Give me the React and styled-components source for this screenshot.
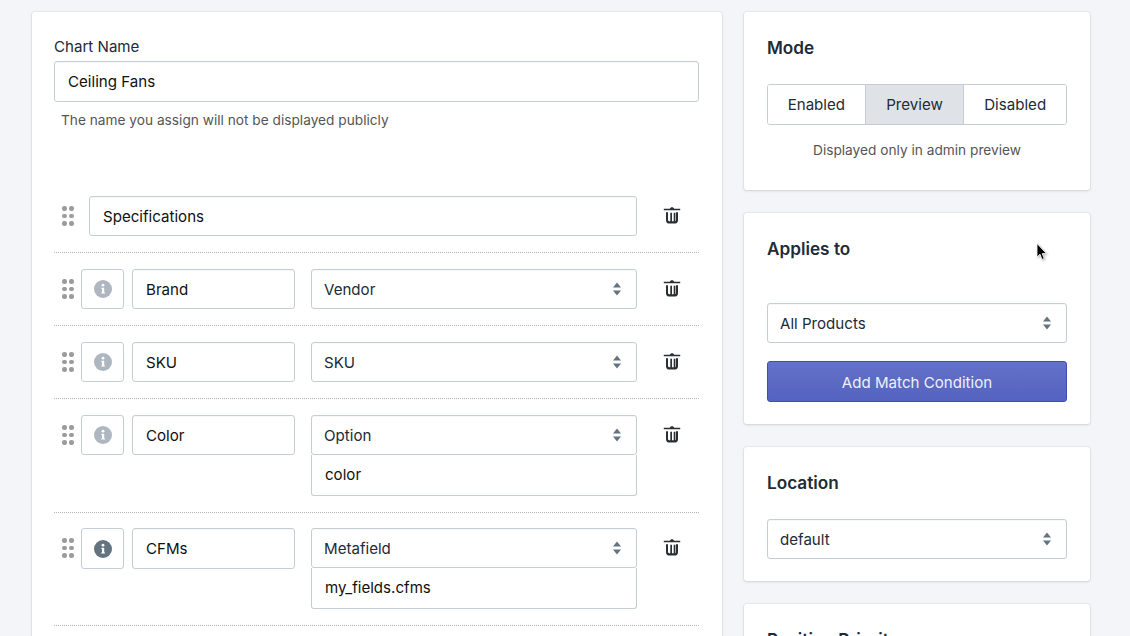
import React from 'react';
import styled, {createGlobalStyle} from 'styled-components';

const GlobalStyle = createGlobalStyle`
  html, body {
    margin: 0;
    padding: 0;
    height: 636px;
    overflow: hidden;
    background: #f4f5f9;
    font-family: Inter, "Noto Sans", sans-serif;
    color: #212b36;
  }
  * { box-sizing: border-box; }
`
const Page = styled.div`
  display: flex;
  align-items: flex-start;
  gap: 22px;
  width: 1130px;
  height: 636px;
  padding: 12px 40px 0 32px;
  overflow: hidden;
  position: relative;
`
const Card = styled.div`
  background: #fff;
  border-radius: 3px;
  box-shadow: 0 0 0 1px rgba(63, 63, 68, 0.05), 0 1px 3px 0 rgba(63, 63, 68, 0.15);
`
const MainCard = styled(Card)`
  width: 690px;
  flex-shrink: 0;
  padding: 25px 23px 40px 22px;
`
const Side = styled.div`
  width: 346px;
  flex-shrink: 0;
  display: flex;
  flex-direction: column;
  gap: 23px;
`
const SideCard = styled(Card)`
  padding: 24px 23px ${props => props.bottom || 22}px;
`
const Heading = styled.h2`
  margin: 0 0 ${props => props.gap || 24}px;
  font-size: 17.2px;
  line-height: 24px;
  font-weight: 600;
  color: #212b36;
`
const Label = styled.label`
  display: block;
  font-size: 15.1px;
  line-height: 20px;
  color: #212b36;
  margin-bottom: 4px;
`
const Input = styled.div`
  height: ${props => props.tall ? 41 : 40}px;
  padding: 0 13px;
  display: flex;
  align-items: center;
  flex-shrink: 0;
  width: ${props => props.w ? props.w + 'px' : 'auto'};
  margin-left: ${props => props.ml || 0}px;
  background: #fff;
  border: 1px solid #c4cdd5;
  border-radius: 3px;
  font-size: 15.1px;
  color: #111;
  box-shadow: inset 0 1px 0 0 rgba(99, 115, 129, 0.05);
`
const Help = styled.p`
  margin: 8px 0 0;
  padding-left: 7px;
  font-size: 13.7px;
  line-height: 20px;
  color: #555;
`
const List = styled.div`
  margin-top: 66px;
`
const Row = styled.div`
  display: flex;
  align-items: flex-start;
  padding: ${props => props.top || 16}px 0 16px;
  border-bottom: 1px dotted #b5b5b5;
  &:first-child { padding-top: 0; }
`
const Grip = styled.div`
  width: 11px;
  margin: 10px 8px 0 8px;
  display: grid;
  grid-template-columns: 4px 4px;
  gap: 3px;
  flex-shrink: 0;
  span {
    width: 4.5px;
    height: 4.5px;
    border-radius: 50%;
    background: #9b9b9b;
  }
`
const InfoButton = styled.div`
  width: 43px;
  height: ${props => props.tall ? 41 : 40}px;
  margin-right: 8px;
  flex-shrink: 0;
  display: flex;
  align-items: center;
  justify-content: center;
  border: 1px solid #c4cdd5;
  border-radius: 3px;
  background: #fff;
`
const FieldStack = styled.div`
  width: 326px;
  margin-left: 16px;
  flex-shrink: 0;
`
const SelectBox = styled(Input)`
  justify-content: space-between;
  padding: 0 15px 0 12px;
  color: #212b36;
`
const SubInput = styled(Input)`
  height: 41px;
  padding-bottom: 1px;
  border-top: none;
  border-top-left-radius: 0;
  border-top-right-radius: 0;
  box-shadow: none;
`
const TrashButton = styled.div`
  width: 20px;
  margin: 10px 0 0 25px;
  flex-shrink: 0;
  display: flex;
  justify-content: center;
`
const Segments = styled.div`
  display: flex;
  height: 41px;
  border: 1px solid #c4cdd5;
  border-radius: 3px;
  overflow: hidden;
`
const Segment = styled.div`
  flex: ${props => props.w};
  display: flex;
  align-items: center;
  justify-content: center;
  font-size: 15.1px;
  color: #212b36;
  background: ${props => props.active ? '#dfe3e8' : '#fff'};
  border-left: ${props => props.active ? '1px solid #c4cdd5' : 'none'};
  border-right: ${props => props.active ? '1px solid #c4cdd5' : 'none'};
`
const Note = styled.p`
  margin: 15px 0 0;
  text-align: center;
  font-size: 13.7px;
  line-height: 20px;
  color: #555;
`
const PrimaryButton = styled.button`
  display: block;
  width: 100%;
  height: 41px;
  margin-top: 18px;
  padding: 2px 0 0;
  border: 1px solid #3f4eae;
  border-radius: 3px;
  background: linear-gradient(180deg, #6371c7, #5563c1);
  color: #eef0fa;
  font-family: inherit;
  font-size: 15.1px;
`
const Cursor = styled.svg`
  position: absolute;
  left: 1036px;
  top: 243px;
  filter: drop-shadow(1px 1px 1px rgba(0, 0, 0, 0.3));
`

const DragHandle = () => (
    <Grip>
        {[0, 1, 2, 3, 4, 5].map((i) => <span key={i}/>)}
    </Grip>
);

const InfoIcon = ({on}) => (
    <svg width="18" height="18" viewBox="0 0 18 18">
        <circle cx="9" cy="9" r="9" fill={on ? '#637381' : '#aeb7bf'}/>
        <circle cx="9" cy="5.2" r="1.4" fill="#fff"/>
        <path d="M7.4 7.8H10.2V12.4H11V13.6H7.2V12.4H8V9H7.4Z" fill="#fff"/>
    </svg>
);

const TrashIcon = () => (
    <svg width="18" height="18" viewBox="0 0 18 18">
        <path d="M6.8 2.8C7.2 0.6 10.8 0.6 11.2 2.8H17.2V4.2H0.8V2.8Z" fill="#2b2f33"/>
        <path d="M3 6.2H5V13.6C5 14.8 5.4 15.2 6.4 15.2H7.3V6.8H9V15.2H10.7V6.8H12.4V15.2C12.9 15.2 13 14.8 13 13.6V6.2H15V14C15 16.2 14 17.4 12.4 17.4H5.6C4 17.4 3 16.2 3 14Z" fill="#2b2f33"/>
    </svg>
);

const UpDown = () => (
    <svg width="8" height="14" viewBox="0 0 8 14">
        <path d="M4 0.5L8 5.5H0Z" fill="#637381"/>
        <path d="M4 13.5L0 8.5H8Z" fill="#637381"/>
    </svg>
);

const Select = ({value}) => (
    <SelectBox>
        {value}
        <UpDown/>
    </SelectBox>
);

const fields = [
    {name: 'Brand', type: 'Vendor'},
    {name: 'SKU', type: 'SKU'},
    {name: 'Color', type: 'Option', sub: 'color'},
    {name: 'CFMs', type: 'Metafield', sub: 'my_fields.cfms', on: true},
];

const App = () => {
    return (
        <Page>
            <GlobalStyle/>
            <MainCard>
                <Label>Chart Name</Label>
                <Input tall>Ceiling Fans</Input>
                <Help>The name you assign will not be displayed publicly</Help>
                <List>
                    <Row>
                        <DragHandle/>
                        <Input w={548} ml={8}>Specifications</Input>
                        <TrashButton><TrashIcon/></TrashButton>
                    </Row>
                    {fields.map((item) => (
                        <Row key={item.name} top={item.on ? 15 : 16}>
                            <DragHandle/>
                            <InfoButton tall={item.on}><InfoIcon on={item.on}/></InfoButton>
                            <Input w={163} tall={item.on}>{item.name}</Input>
                            <FieldStack>
                                <Select value={item.type}/>
                                {item.sub && <SubInput>{item.sub}</SubInput>}
                            </FieldStack>
                            <TrashButton><TrashIcon/></TrashButton>
                        </Row>
                    ))}
                </List>
            </MainCard>
            <Side>
                <SideCard bottom={30}>
                    <Heading>Mode</Heading>
                    <Segments>
                        <Segment w={98}>Enabled</Segment>
                        <Segment w={99} active>Preview</Segment>
                        <Segment w={103}>Disabled</Segment>
                    </Segments>
                    <Note>Displayed only in admin preview</Note>
                </SideCard>
                <SideCard>
                    <Heading gap={42}>Applies to</Heading>
                    <Select value="All Products"/>
                    <PrimaryButton>Add Match Condition</PrimaryButton>
                </SideCard>
                <SideCard>
                    <Heading>Location</Heading>
                    <Select value="default"/>
                </SideCard>
                <SideCard>
                    <Heading>Position Priority</Heading>
                </SideCard>
            </Side>
            <Cursor width="12" height="18" viewBox="0 0 12 18">
                <path d="M1 0.5V14L4 11.2L6 16.5L8.2 15.6L6.2 10.6H10.4Z" fill="#000" stroke="#fff" strokeWidth="0.8"/>
            </Cursor>
        </Page>
    );
};

export default App;
